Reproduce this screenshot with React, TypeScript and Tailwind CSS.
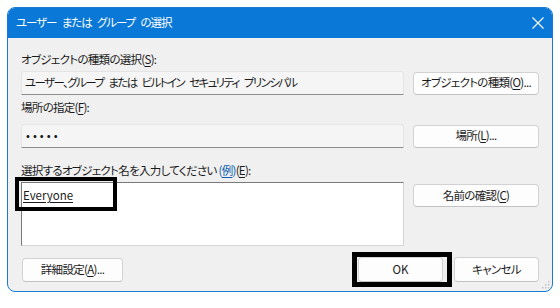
import React from 'react'

const Btn = ({ children, className = '' }: { children: React.ReactNode; className?: string }) => (
  <button
    className={`flex items-center justify-center whitespace-nowrap rounded-[4px] border border-[#d2d2d2] border-b-[#c2c2c2] bg-[#fdfdfd] text-[11.5px] text-[#1b1b1b] ${className}`}
  >
    {children}
  </button>
)

const U = ({ children }: { children: React.ReactNode }) => <span className="underline underline-offset-2">{children}</span>

const App = () => {
  return (
    <div className="min-h-[308px] w-[560px] bg-white pl-[7px] pt-[7px] font-['Noto_Sans_CJK_JP','Noto_Sans',sans-serif] tracking-[-0.7px] [font-feature-settings:'palt']">
      <div className="relative flex h-[285px] w-[546px] flex-col overflow-hidden rounded-[8px] border border-[#1a7bd2] bg-[#f0f0f0]">
        <div className="flex h-[30px] shrink-0 items-center justify-between bg-[#0a78d6] pl-[8px] pr-[8px] text-[11.5px] text-white">
          <span className="whitespace-pre tracking-[-1.1px] [word-spacing:4px]">ユーザー または グループ の選択</span>
          <svg width="12" height="12" viewBox="0 0 12 12" fill="none" stroke="white" strokeWidth="1.1">
            <path d="M0.5 0.5 L11.5 11.5 M11.5 0.5 L0.5 11.5" />
          </svg>
        </div>

        <div className="flex flex-col px-[13px] text-[11.5px] text-[#1b1b1b]">
          <div className="mt-[13px] h-[16px] leading-[16px]">
            オブジェクトの種類の選択(<U>S</U>):
          </div>
          <div className="mt-[4px] flex items-center gap-[9px]">
            <div className="flex h-[24px] w-[383px] items-center whitespace-pre rounded-t-[3px] border border-[#e4e4e4] border-b-[#8c8c8c] bg-[#f5f5f5] pl-[3px] tracking-[-1.6px] [word-spacing:4px]">
              ユーザー、グループ または ビルトイン セキュリティ プリンシパル
            </div>
            <Btn className="h-[23px] w-[126px]">
              オブジェクトの種類(<U>O</U>)...
            </Btn>
          </div>

          <div className="mt-[4px] h-[16px] leading-[16px]">
            場所の指定(<U>F</U>):
          </div>
          <div className="mt-[9px] flex items-center gap-[9px]">
            <div className="flex h-[24px] w-[383px] items-center rounded-t-[3px] border border-[#e4e4e4] border-b-[#8c8c8c] bg-[#f5f5f5] pl-[4px] tracking-[3px]">
              •••••
            </div>
            <Btn className="h-[23px] w-[126px]">
              場所(<U>L</U>)...
            </Btn>
          </div>

          <div className="mt-[14px] h-[16px] leading-[16px]">
            選択するオブジェクト名を入力してください <span className="text-[#0a5fb4]">(<U>例</U>)</span>(<U>E</U>):
          </div>
          <div className="mt-[4px] flex items-start gap-[9px]">
            <div className="h-[64px] w-[383px] border border-[#d4d4d4] border-l-[#7a7a7a] border-t-[#7a7a7a] bg-white pl-[1px] pt-[4px] tracking-normal">
              <span className="underline underline-offset-2">Everyone</span>
            </div>
            <Btn className="mt-[2px] h-[23px] w-[126px]">
              名前の確認(<U>C</U>)
            </Btn>
          </div>

          <div className="mt-[11px] flex items-center">
            <Btn className="ml-[1px] h-[24px] w-[101px]">
              詳細設定(<U>A</U>)...
            </Btn>
            <div className="flex-1" />
            <Btn className="h-[25px] w-[85px] tracking-normal">OK</Btn>
            <Btn className="ml-[11px] h-[25px] w-[85px]">キャンセル</Btn>
          </div>
        </div>

        <svg className="absolute bottom-[2px] right-[2px]" width="8" height="8" viewBox="0 0 8 8" fill="#c4c4c4">
          <rect x="6" y="0" width="1.5" height="1.5" />
          <rect x="3" y="3" width="1.5" height="1.5" />
          <rect x="6" y="3" width="1.5" height="1.5" />
          <rect x="0" y="6" width="1.5" height="1.5" />
          <rect x="3" y="6" width="1.5" height="1.5" />
          <rect x="6" y="6" width="1.5" height="1.5" />
        </svg>
      </div>

      <div className="pointer-events-none absolute left-[15px] top-[177px] h-[34px] w-[102px] border-[4px] border-black" />
      <div className="pointer-events-none absolute left-[352px] top-[252px] h-[35px] w-[100px] border-[5px] border-black" />
    </div>
  )
}

export default App
